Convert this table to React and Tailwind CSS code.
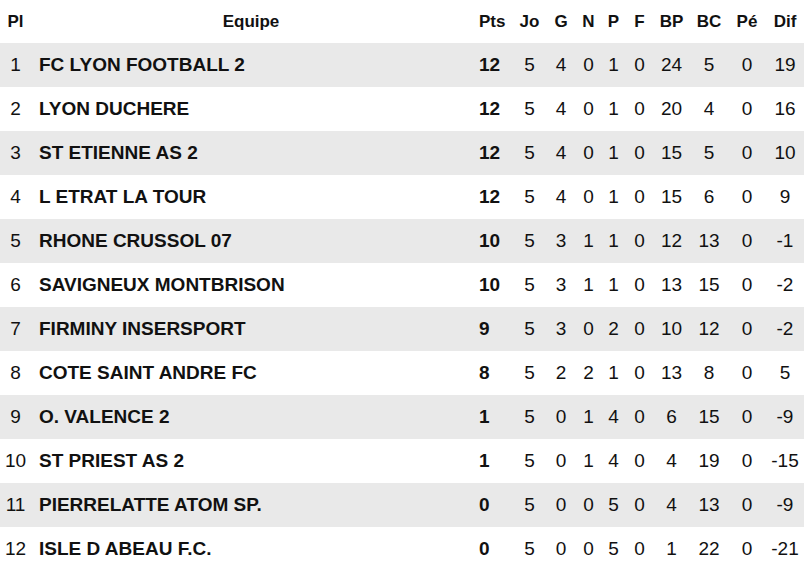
const rows = [
  [1, 'FC LYON FOOTBALL 2', 12, 5, 4, 0, 1, 0, 24, 5, 0, 19],
  [2, 'LYON DUCHERE', 12, 5, 4, 0, 1, 0, 20, 4, 0, 16],
  [3, 'ST ETIENNE AS 2', 12, 5, 4, 0, 1, 0, 15, 5, 0, 10],
  [4, 'L ETRAT LA TOUR', 12, 5, 4, 0, 1, 0, 15, 6, 0, 9],
  [5, 'RHONE CRUSSOL 07', 10, 5, 3, 1, 1, 0, 12, 13, 0, -1],
  [6, 'SAVIGNEUX MONTBRISON', 10, 5, 3, 1, 1, 0, 13, 15, 0, -2],
  [7, 'FIRMINY INSERSPORT', 9, 5, 3, 0, 2, 0, 10, 12, 0, -2],
  [8, 'COTE SAINT ANDRE FC', 8, 5, 2, 2, 1, 0, 13, 8, 0, 5],
  [9, 'O. VALENCE 2', 1, 5, 0, 1, 4, 0, 6, 15, 0, -9],
  [10, 'ST PRIEST AS 2', 1, 5, 0, 1, 4, 0, 4, 19, 0, -15],
  [11, 'PIERRELATTE ATOM SP.', 0, 5, 0, 0, 5, 0, 4, 13, 0, -9],
  [12, 'ISLE D ABEAU F.C.', 0, 5, 0, 0, 5, 0, 1, 22, 0, -21],
];

const stats = ['Jo', 'G', 'N', 'P', 'F', 'BP', 'BC', 'Pé', 'Dif'];

export default function App() {
  return (
    <div className="w-[804px] h-[573px] bg-white text-[#111] font-['Liberation_Sans',Arial,sans-serif]">
      <table className="w-[804px] table-fixed border-collapse">
        <colgroup>
          <col className="w-[31px]" />
          <col className="w-[440px]" />
          <col className="w-[42px]" />
          <col className="w-[33px]" />
          <col className="w-[30px]" />
          <col className="w-[25px]" />
          <col className="w-[25px]" />
          <col className="w-[27px]" />
          <col className="w-[37px]" />
          <col className="w-[38px]" />
          <col className="w-[38px]" />
          <col className="w-[38px]" />
        </colgroup>
        <thead>
          <tr className="h-[43px] text-[17px] font-bold">
            <th className="text-center p-0">Pl</th>
            <th className="text-center p-0">Equipe</th>
            <th className="text-left pl-[8px] p-0">Pts</th>
            {stats.map((s) => (
              <th key={s} className="text-center p-0">{s}</th>
            ))}
          </tr>
        </thead>
        <tbody>
          {rows.map((r, i) => (
            <tr key={r[0]} className={`h-[44px] text-[19px] ${i % 2 === 0 ? 'bg-[#e9e9e9]' : 'bg-white'}`}>
              <td className="text-center p-0">{r[0]}</td>
              <td className="text-left pl-[8px] font-bold whitespace-nowrap">{r[1]}</td>
              <td className="text-left pl-[8px] font-bold">{r[2]}</td>
              {r.slice(3).map((v, j) => (
                <td key={j} className="text-center p-0">{v}</td>
              ))}
            </tr>
          ))}
        </tbody>
      </table>
    </div>
  );
}
